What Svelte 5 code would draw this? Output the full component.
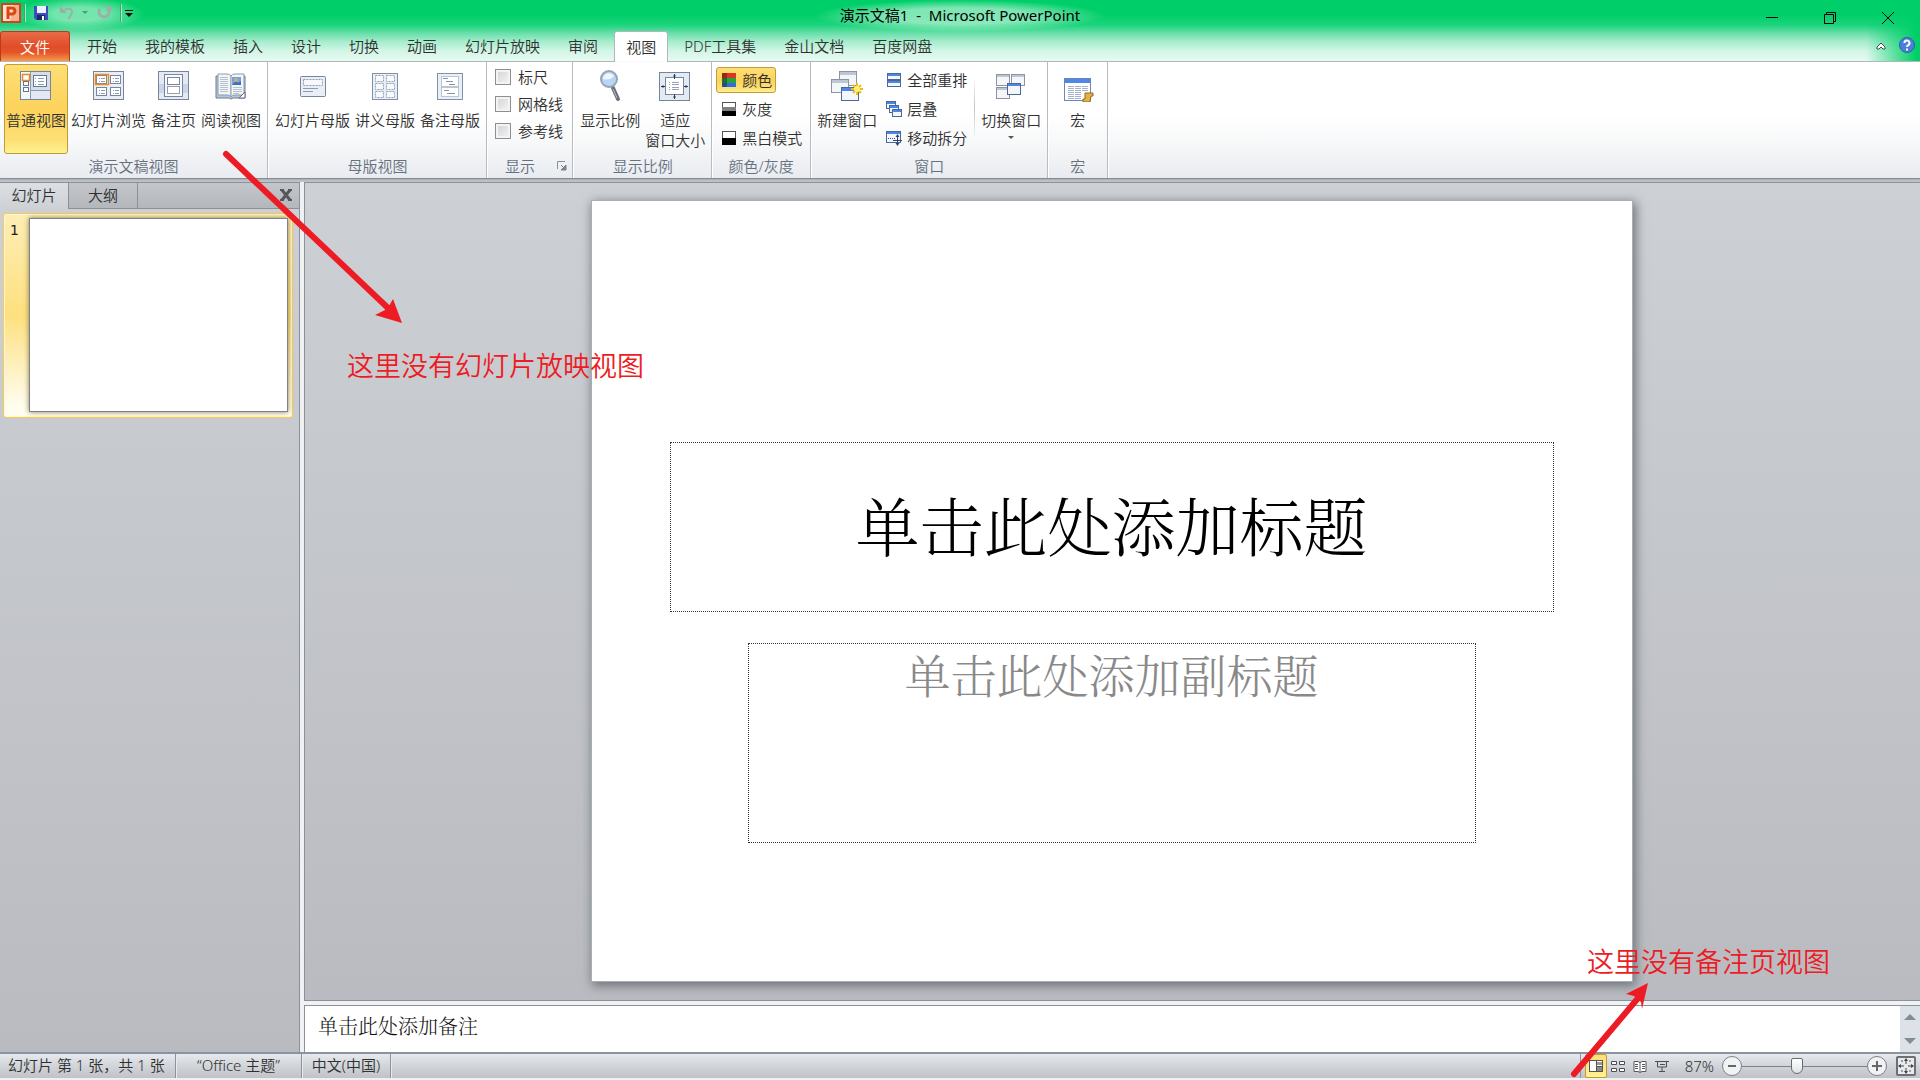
<script>
  const tabs = ['开始', '我的模板', '插入', '设计', '切换', '动画', '幻灯片放映', '审阅', '视图', 'PDF工具集', '金山文档', '百度网盘'];
  const presentationViews = [
    { label: '普通视图', icon: 'normal', active: true },
    { label: '幻灯片浏览', icon: 'sorter' },
    { label: '备注页', icon: 'notes' },
    { label: '阅读视图', icon: 'reading' }
  ];
  const masterViews = [
    { label: '幻灯片母版', icon: 'slideMaster' },
    { label: '讲义母版', icon: 'handoutMaster' },
    { label: '备注母版', icon: 'notesMaster' }
  ];
  const showOptions = ['标尺', '网格线', '参考线'];
  const colorModes = [
    { label: '颜色', icon: 'color', active: true },
    { label: '灰度', icon: 'gray' },
    { label: '黑白模式', icon: 'bw' }
  ];
  const windowActions = [
    { label: '全部重排', icon: 'arrange' },
    { label: '层叠', icon: 'cascade' },
    { label: '移动拆分', icon: 'split' }
  ];
  const statusViews = [
    { label: '普通视图', icon: 'sNormal', active: true },
    { label: '幻灯片浏览', icon: 'sSorter' },
    { label: '阅读视图', icon: 'sReading' },
    { label: '幻灯片放映', icon: 'sShow' }
  ];
  let zoom = $state(43);
</script>

{#snippet win(x, y, w, h, main)}
  <rect x={x + 0.5} y={y + 0.5} width={w - 1} height={h - 1} fill="#f4f6fa" stroke={main ? '#4a689c' : '#8b949f'} />
  <rect x={x + 1} y={y + 1} width={w - 2} height={w < 16 ? 2 : 3} fill={main ? '#4d86e8' : '#bcc6d4'} />
{/snippet}

{#snippet big(name)}
  <svg class="icon32" viewBox="0 0 32 32" aria-hidden="true">
    {#if name === 'normal'}
      <rect x="0.5" y="1.5" width="30" height="28" fill="#f3f6fa" stroke="#77859a" />
      <path d="M10.500 2v27M11 20.500h19" stroke="#8b99ad" fill="none" />
      <rect x="11" y="21" width="19" height="8" fill="#e3e9f2" />
      <rect x="11" y="2" width="19" height="18" fill="#d5dfec" />
      <rect x="2.500" y="4.500" width="7" height="6" fill="#fff" stroke="#ee8a22" stroke-width="1.500" />
      <rect x="3.500" y="11.500" width="5" height="4" fill="#fff" stroke="#66768e" />
      <rect x="3.500" y="17.500" width="5" height="4" fill="#fff" stroke="#66768e" />
      <rect x="13.500" y="5.500" width="13" height="11" fill="#fff" stroke="#66768e" />
      <path d="M18 8.500h6M18 11.500h6M18 14.500h6M15 8.500h1M15 11.500h1M15 14.500h1" stroke="#8d9ab0" />
    {:else if name === 'sorter'}
      <rect x="0.5" y="1.5" width="30" height="28" fill="#e9eef5" stroke="#77859a" />
      {#each [[3, 5], [17, 5], [3, 17], [17, 17]] as [x, y]}
        <rect x={x + 0.5} y={y + 0.5} width="10" height="8" fill="#fff" stroke="#7786a0" />
        <path d={`M${x + 5} ${y + 3.5}h4M${x + 5} ${y + 6.5}h4M${x + 3} ${y + 3.5}h1M${x + 3} ${y + 6.5}h1`} stroke="#8d9ab0" />
      {/each}
      <rect x="2.500" y="4.500" width="13" height="10" fill="none" stroke="#ee8a22" stroke-width="1.500" />
    {:else if name === 'notes'}
      <rect x="0.5" y="1.5" width="30" height="28" fill="#e3eaf3" stroke="#77859a" />
      <rect x="1" y="14" width="29" height="9" fill="#c8d7e8" />
      <rect x="6.500" y="4.500" width="18" height="22" fill="#f8fafc" stroke="#7786a0" />
      <rect x="9.500" y="7.500" width="12" height="7" fill="#fff" stroke="#7786a0" />
      <rect x="9.500" y="16.500" width="12" height="7" fill="#fff" stroke="#333f52" stroke-dasharray="1 1" />
    {:else if name === 'reading'}
      <path d="M1 6v22h13l2 1 2-1h12V6z" fill="#b9c6d6" stroke="#6d7c92" />
      <path d="M3 4h9q3 0 4 2v21q-1-2-4-2H3z" fill="#f1f4f8" stroke="#8f9bad" />
      <path d="M29 4h-9q-3 0-4 2v21q1-2 4-2h9z" fill="#f1f4f8" stroke="#8f9bad" />
      <path d="M5 7.500h8M5 9.500h8M5 11.500h8M5 13.500h8M5 15.500h8M5 17.500h8M5 19.500h8M5 21.500h8M18 17.500h9M18 19.500h9M18 21.500h9M18 23.500h6" stroke="#b8c1ce" />
      <rect x="17" y="7" width="9" height="8" fill="#6aa5e6" />
      <path d="M17 15l4-4 2 2 3-2v4z" fill="#3d6fb5" /><circle cx="21" cy="10" r="2" fill="#f2a25c" />
      <path d="M24 28l6-6v6z" fill="#fff" stroke="#5c6c84" />
    {:else if name === 'slideMaster'}
      <rect x="3.500" y="6.500" width="25" height="20" rx="1" fill="#eaeff7" stroke="#77859a" />
      <rect x="6.500" y="9.500" width="19" height="6" fill="#f6f8fb" stroke="#8e9cb2" stroke-dasharray="2 1" />
      <path d="M6 18.500h15M6 21.500h10" stroke="#8e9cb2" />
    {:else if name === 'handoutMaster'}
      <rect x="3.500" y="3.500" width="25" height="26" fill="#e9eff6" stroke="#8290a5" />
      {#each [5, 13, 21] as y}
        <rect x="6.500" y={y + 0.5} width="8" height="6" fill="#f8fafc" stroke="#95a3b8" stroke-dasharray="2 1" />
        <rect x="17.500" y={y + 0.5} width="8" height="6" fill="#f8fafc" stroke="#95a3b8" stroke-dasharray="2 1" />
      {/each}
    {:else if name === 'notesMaster'}
      <rect x="3.500" y="3.500" width="25" height="26" fill="#e9eff6" stroke="#8290a5" />
      <rect x="7.500" y="6.500" width="17" height="10" fill="#fff" stroke="#8593aa" stroke-dasharray="1 1" />
      <rect x="7.500" y="17.500" width="17" height="9" fill="#fff" stroke="#8593aa" stroke-dasharray="1 1" />
      <path d="M9 8.500h5M12 11.500h7M15 14.500h6M10 20.500h5M13 23.500h8" stroke="#8593aa" />
    {:else if name === 'magnifier'}
      <path d="M19 18l5 11" stroke="#6a717b" stroke-width="4" stroke-linecap="round" />
      <path d="M19 19l4 9" stroke="#b4bac4" stroke-width="1" />
      <circle cx="15" cy="9" r="8" fill="#b8d5f2" stroke="#96a4b8" stroke-width="2" />
      <path d="M9 9a6 6 0 0 1 11-3q-4 5-11 3z" fill="#eef6fe" />
    {:else if name === 'fit'}
      <rect x="0.5" y="2.500" width="30" height="28" fill="#e2eaf4" stroke="#77859a" />
      <rect x="6.500" y="7.500" width="18" height="17" fill="#fff" stroke="#7786a0" />
      <path d="M13 12.500h7M13 14.500h7M13 17.500h7M13 19.500h7M10 12.500h1M10 14.500h1M10 17.500h1M10 19.500h1" stroke="#95a3ba" />
      <path d="M15.500 4v5M15.500 24v5M2 16.500h4M25 16.500h4" stroke="#333b48" />
      <path d="M14 6.500l1.500-2.500 1.500 2.500zM14 26.500l1.500 2.500 1.500-2.500zM4.500 15L2 16.500 4.500 18zM26.500 15l2.500 1.500-2.500 1.500z" fill="#333b48" />
    {:else if name === 'newWindow'}
      {@render win(8, 1, 18, 15, false)}
      {@render win(0, 9, 18, 14, false)}
      {@render win(10, 17, 18, 14, true)}
      <path d="M26 13v12M20 19h12M22 15l8 8M30 15l-8 8" stroke="#f3bb17" stroke-width="2" />
      <circle cx="26" cy="19" r="3" fill="#fff27a" />
    {:else if name === 'switchWindow'}
      {@render win(1, 4, 14, 12, false)}
      {@render win(16, 4, 14, 12, false)}
      {@render win(1, 17, 14, 12, false)}
      {@render win(12, 13, 14, 12, true)}
    {:else if name === 'macro'}
      <rect x="2.500" y="8.500" width="26" height="22" fill="#fff" stroke="#6d86b2" />
      <rect x="3" y="9" width="25" height="4" fill="#4d86e8" />
      <path d="M6 16.500h6M6 18.500h6M6 20.500h6M6 22.500h6M6 24.500h6M6 26.500h6M6 28.500h6M13 16.500h6M13 18.500h6M13 20.500h6M13 22.500h6M13 24.500h6M13 26.500h6M13 28.500h6M20 16.500h6M20 18.500h6M20 20.500h6" stroke="#a5b1c8" />
      <path d="M23 23h8v3h-2l-1 6h-7v-3h2z" fill="#e3b244" stroke="#94681a" />
    {/if}
  </svg>
{/snippet}

{#snippet small(name)}
  <svg class="icon16" viewBox="0 0 16 16" aria-hidden="true">
    {#if name === 'color'}
      <rect x="1" y="1" width="14" height="5" fill="#d93820" /><rect x="1" y="6" width="14" height="5" fill="#2ba138" /><rect x="1" y="11" width="14" height="4" fill="#2d6fe0" />
      <path d="M1 1h5v14H1z" fill="#000" opacity=".3" />
    {:else if name === 'gray'}
      <rect x="1.500" y="1.500" width="13" height="13" fill="#fff" stroke="#555" /><rect x="1" y="6" width="14" height="4" fill="#808080" /><rect x="1" y="10" width="14" height="5" fill="#000" />
    {:else if name === 'bw'}
      <rect x="1.500" y="1.500" width="13" height="13" fill="#fff" stroke="#555" /><rect x="1" y="8" width="14" height="7" fill="#000" />
    {:else if name === 'arrange'}
      {@render win(1, 1, 14, 7, true)}
      {@render win(1, 8, 14, 7, true)}
    {:else if name === 'cascade'}
      {@render win(0, 0, 10, 8, true)}
      {@render win(3, 4, 10, 8, true)}
      {@render win(6, 8, 10, 8, true)}
    {:else if name === 'split'}
      {@render win(0, 1, 15, 12, true)}
      <path d="M2 8.500h7" stroke="#3b4f75" stroke-dasharray="1 1" />
      <path d="M11.500 6v9M7 10.500h9" stroke="#2c4470" />
      <path d="M9.500 7l2-3 2 3zM9.500 13l2 3 2-3z" fill="#2c4470" />
    {:else if name === 'sNormal'}
      <rect x="1.500" y="2.500" width="13" height="11" fill="#fff" stroke="#555" /><path d="M8.500 3v10M9 8.500h5" stroke="#555" /><rect x="9" y="4" width="5" height="3" fill="#9a9a9a" /><rect x="9" y="9" width="5" height="4" fill="#8a8a8a" />
    {:else if name === 'sSorter'}
      <path d="M1.500 3.500h5v3h-5zM9.500 3.500h5v3h-5zM1.500 10.500h5v3h-5zM9.500 10.500h5v3h-5z" fill="#fff" stroke="#4c4f54" />
    {:else if name === 'sReading'}
      <path d="M2 3.500h4l2 1 2-1h4v10h-4l-2 1-2-1H2z" fill="#fff" stroke="#55585e" /><path d="M8 4v10M3 6.500h3M3 8.500h3M3 10.500h3M10 6.500h3M10 8.500h3M10 10.500h3" stroke="#55585e" />
    {:else if name === 'sShow'}
      <path d="M1 3.500h14M3.500 4v5h9V4M8 9v4M5 13.500h6M6 6.500h5" fill="none" stroke="#4c4f54" />
    {/if}
  </svg>
{/snippet}

<div class="app">
  <header>
    <div class="titlebar">
      <div class="qat">
        <svg class="logo" viewBox="0 0 20 20" aria-hidden="true">
          <rect x="1" y="1" width="18" height="18" fill="#fde0cf" stroke="#d8401c" stroke-width="2" />
          <path d="M13 2h5v16H9z" fill="#f8b092" />
          <path d="M7 16V5h4a3 3 0 0 1 0 6H7" fill="none" stroke="#d9480f" stroke-width="3" />
        </svg>
        <span class="vsep"></span>
        <button class="tool" aria-label="保存">
          <svg viewBox="0 0 16 16"><path d="M1 1h14v14H3l-2-2z" fill="#3c4ec0" /><rect x="4" y="1" width="9" height="7" fill="#eef2ff" /><rect x="4" y="10" width="8" height="5" fill="#1d2a66" /><rect x="9" y="11" width="2" height="4" fill="#fff" /></svg>
        </button>
        <button class="tool" aria-label="撤消">
          <svg viewBox="0 0 16 16"><path d="M4 6q7-5 9 0 0 4-4 8" fill="none" stroke="#9db0a7" stroke-width="2" /><path d="M1 1v7h7z" fill="#9db0a7" /></svg>
        </button>
        <svg class="tiny undo-menu" viewBox="0 0 8 8"><path d="M1 2h6L4 5z" fill="#4b9a77" /></svg>
        <button class="tool" aria-label="重复">
          <svg viewBox="0 0 16 16"><path d="M4 4a5 5 0 1 0 8 0" fill="none" stroke="#9db0a7" stroke-width="3" /><path d="M8 1h7v6z" fill="#9db0a7" /></svg>
        </button>
        <span class="vsep"></span>
        <button class="menu" aria-label="自定义快速访问工具栏">
          <svg viewBox="0 0 8 16"><path d="M0 5h8v1H0zM0 8h8l-4 4z" fill="#111" /></svg>
        </button>
      </div>
      <h1>演示文稿1&nbsp; -&nbsp; Microsoft PowerPoint</h1>
      <div class="controls">
        <button aria-label="最小化"><svg viewBox="0 0 14 14"><path d="M1 6.500h12" stroke="#000" /></svg></button>
        <button aria-label="还原"><svg viewBox="0 0 14 14"><path d="M1.500 3.500h9v9h-9zM3.500 3.500v-2h9v9h-2" fill="none" stroke="#000" /></svg></button>
        <button aria-label="关闭"><svg viewBox="0 0 14 14"><path d="M1 1l12 12M13 1L1 13" stroke="#000" /></svg></button>
      </div>
    </div>
    <nav class="tabs">
      <button class="file">文件</button>
      {#each tabs as tab}
        <button class="tab" class:active={tab === '视图'}>{tab}</button>
      {/each}
      <div class="help">
        <button aria-label="功能区最小化"><svg viewBox="0 0 16 16"><path d="M4 10l4-4 4 4v2h-2l-2-2-2 2H4z" fill="#fff" stroke="#45504b" /></svg></button>
        <button aria-label="帮助"><svg viewBox="0 0 16 16"><circle cx="8" cy="8" r="7.500" fill="#4a80d6" stroke="#2f5fb0" /><path d="M5.500 6a2.500 2.500 0 1 1 3.500 2.300q-1 .5-1 1.700M8 11.500v2" fill="none" stroke="#fff" stroke-width="2" /></svg></button>
      </div>
    </nav>
  </header>

  <section class="ribbon">
    <div class="group">
      <div class="body">
        {#each presentationViews as item}
          <button class="big" class:active={item.active}>{@render big(item.icon)}<span>{item.label}</span></button>
        {/each}
      </div>
      <div class="caption">演示文稿视图</div>
    </div>
    <div class="group roomy">
      <div class="body">
        {#each masterViews as item}
          <button class="big">{@render big(item.icon)}<span>{item.label}</span></button>
        {/each}
      </div>
      <div class="caption">母版视图</div>
    </div>
    <div class="group roomy">
      <div class="body checks">
        {#each showOptions as option}
          <label><input type="checkbox" />{option}</label>
        {/each}
      </div>
      <div class="caption with-launcher"><span>显示</span>
        <button class="launcher" aria-label="网格设置"><svg viewBox="0 0 10 10"><path d="M.5 8V.5H8" fill="none" stroke="#8b9098" /><path d="M4 4l3 3M9 4v5H4z" fill="#7e838b" stroke="#7e838b" /></svg></button>
      </div>
    </div>
    <div class="group roomy">
      <div class="body">
        <button class="big">{@render big('magnifier')}<span>显示比例</span></button>
        <button class="big">{@render big('fit')}<span>适应<br />窗口大小</span></button>
      </div>
      <div class="caption">显示比例</div>
    </div>
    <div class="group">
      <div class="body list">
        {#each colorModes as item}
          <button class="row" class:active={item.active}>{@render small(item.icon)}{item.label}</button>
        {/each}
      </div>
      <div class="caption">颜色/灰度</div>
    </div>
    <div class="group">
      <div class="body">
        <button class="big">{@render big('newWindow')}<span>新建窗口</span></button>
        <div class="list inner">
          {#each windowActions as item}
            <button class="row">{@render small(item.icon)}{item.label}</button>
          {/each}
        </div>
        <span class="divider"></span>
        <button class="big">{@render big('switchWindow')}<span>切换窗口</span><svg class="tiny drop" viewBox="0 0 8 8"><path d="M1 2h6L4 5z" fill="#555" /></svg></button>
      </div>
      <div class="caption">窗口</div>
    </div>
    <div class="group macro">
      <div class="body">
        <button class="big">{@render big('macro')}<span>宏</span></button>
      </div>
      <div class="caption">宏</div>
    </div>
  </section>

  <main>
    <aside>
      <div class="pane-tabs">
        <button class="pane-tab active">幻灯片</button>
        <button class="pane-tab">大纲</button>
        <button class="close" aria-label="关闭窗格"><svg viewBox="0 0 14 14"><path d="M3 2l8 10M11 2L3 12" stroke="#54585e" stroke-width="3" /><path d="M1 2h4M9 2h4M1 12h4M9 12h4" stroke="#54585e" stroke-width="2" /></svg></button>
      </div>
      <div class="thumb">
        <span class="num">1</span>
        <div class="mini"></div>
      </div>
    </aside>
    <div class="work">
      <div class="canvas">
        <article class="slide">
          <div class="ph title">单击此处添加标题</div>
          <div class="ph sub">单击此处添加副标题</div>
        </article>
      </div>
      <div class="notes">
        <textarea aria-label="备注" placeholder="单击此处添加备注"></textarea>
        <div class="scroll">
          <svg viewBox="0 0 12 6"><path d="M0 6l6-6 6 6z" fill="#7f8f93" /></svg>
          <svg viewBox="0 0 12 6"><path d="M0 0l6 6 6-6z" fill="#7f8f93" /></svg>
        </div>
      </div>
    </div>
  </main>

  <footer>
    <span class="cell first">幻灯片 第 1 张，共 1 张</span>
    <span class="cell theme">“Office 主题”</span>
    <span class="cell lang">中文(中国)</span>
    <div class="right">
      <div class="views">
        {#each statusViews as item}
          <button class:active={item.active} aria-label={item.label}>{@render small(item.icon)}</button>
        {/each}
      </div>
      <span class="percent">87%</span>
      <button class="round" aria-label="缩小"><svg viewBox="0 0 20 20"><circle cx="10" cy="10" r="9.500" fill="#f0f2f4" stroke="#7b828b" /><path d="M6 10h8" stroke="#666" stroke-width="2" /></svg></button>
      <input type="range" min="0" max="100" bind:value={zoom} aria-label="显示比例" />
      <button class="round" aria-label="放大"><svg viewBox="0 0 20 20"><circle cx="10" cy="10" r="9.500" fill="#f0f2f4" stroke="#7b828b" /><path d="M5 10h10M10 5v10" stroke="#666" stroke-width="2" /></svg></button>
      <button class="round fit" aria-label="使幻灯片适应当前窗口"><svg viewBox="0 0 20 20"><rect x="1" y="1" width="18" height="18" rx="1" fill="#e8eaee" stroke="#6c7076" stroke-width="2" /><path d="M10 3v5M10 12v5M3 10h5M12 10h5" stroke="#444" /><path d="M8 5l2-3 2 3zM8 15l2 3 2-3zM5 8l-3 2 3 2zM15 8l3 2-3 2z" fill="#444" /><path d="M5 5h2M13 5h2M5 15h2M13 15h2" stroke="#555" /></svg></button>
    </div>
  </footer>

  <svg class="arrow one" viewBox="0 0 184 176" aria-hidden="true">
    <path d="M6 6L168 160" stroke="#ed1c24" stroke-width="6" stroke-linecap="round" />
    <path d="M182 175l-9-24-4 7-4 4-10 5z" fill="#ed1c24" />
  </svg>
  <p class="remark first-remark">这里没有幻灯片放映视图</p>
  <svg class="arrow two" viewBox="0 0 82 98" aria-hidden="true">
    <path d="M5 93L70 16" stroke="#ed1c24" stroke-width="6" stroke-linecap="round" />
    <path d="M79 2L57 13l8 2 7 6 1 7z" fill="#ed1c24" />
  </svg>
  <p class="remark second-remark">这里没有备注页视图</p>
</div>

<style>
  :global(body) { margin: 0; }
  .app {
    position: relative;
    display: flex;
    flex-direction: column;
    height: 100vh;
    overflow: hidden;
    box-sizing: border-box;
    padding-bottom: 2px;
    background: #f0f0f0;
    color: #303030;
    font: 350 15px/20px 'Noto Sans', 'Noto Sans CJK SC', sans-serif;
  }
  .app *, .app *::before { box-sizing: border-box; }
  button { font: inherit; color: inherit; background: none; border: 0; padding: 0; margin: 0; }
  svg { display: block; flex: none; }
  header {
    background:
      radial-gradient(ellipse 64px 17px at 80px 14px, rgba(255, 255, 255, .45) 40%, rgba(255, 255, 255, 0)),
      radial-gradient(ellipse 145px 16px at 50% 16px, rgba(255, 255, 255, .5) 50%, rgba(255, 255, 255, 0)),
      linear-gradient(to right, rgba(0, 207, 105, 0) calc(100% - 54px), #00cf69 calc(100% - 4px)),
      linear-gradient(#00cf69 15px, #1cd47c 25px, #6fe0ad 34px, #a8edce 42px, #d2f6e6 51px, #e6faf1 61px);
  }
  .titlebar { display: grid; grid-template-columns: 1fr auto 1fr; height: 31px; }
  .qat { display: flex; align-items: center; height: 26px; padding-left: 1px; }
  .logo { width: 20px; height: 20px; }
  .vsep { width: 1px; height: 18px; margin: 0 3px; background: #4f9c78; box-shadow: 1px 0 #9fe8c6; }
  .qat .tool { padding: 0 5px; }
  .qat .tool svg { width: 16px; height: 16px; }
  .menu { padding-left: 1px; }
  .menu svg { width: 8px; height: 16px; }
  .tiny { width: 8px; height: 8px; }
  .undo-menu { margin: 0 2px 0 1px; }
  h1 {
    margin: 0;
    padding: 5px 0 0;
    font-size: 15px;
    line-height: 20px;
    font-weight: 400;
    color: #000;
  }
  .controls { display: flex; justify-content: flex-end; padding: 4px 3px 0 0; }
  .controls button { display: flex; align-items: center; justify-content: center; width: 58px; height: 28px; }
  .controls svg { width: 14px; height: 14px; }
  .tabs { display: flex; height: 31px; border-bottom: 1px solid #b3b6bb; }
  .tabs button { height: 30px; }
  .file {
    width: 70px;
    margin-right: 3px;
    color: #fff;
    border: 1px solid #b93b1b;
    border-bottom: 0;
    border-radius: 3px 3px 0 0;
    background: linear-gradient(#ea6a48, #e04e28 50%, #e5532a 70%, #f59a4a);
  }
  .tab { padding: 0 14px; }
  .tabs .active {
    height: 31px;
    margin: 0 2px;
    border: 1px solid #b3b6bb;
    border-bottom: 0;
    border-radius: 3px 3px 0 0;
    padding: 0 11px 1px;
    background: #fff;
  }
  .help { display: flex; gap: 10px; margin-left: auto; padding: 0 5px 2px 0; align-items: center; }
  .help svg { width: 16px; height: 16px; }
  .ribbon {
    position: relative;
    z-index: 1;
    display: flex;
    height: 117px;
    border-bottom: 1px solid #878b92;
    background: linear-gradient(#fff 45%, #f7f8f9 70%, #e8ebf0);
    box-shadow: 0 1px 2px #a5a9b0;
  }
  .group {
    display: flex;
    flex-direction: column;
    padding: 2px 4px 0;
    border-right: 1px solid #b9bdc3;
    box-shadow: 1px 0 #fff;
  }
  .group.roomy { padding: 2px 4px 0 5px; }
  .body { display: flex; height: 90px; }
  .caption { padding-top: 2px; text-align: center; color: #66707f; }
  .big {
    display: flex;
    flex-direction: column;
    align-items: center;
    gap: 8px;
    height: 90px;
    padding: 5px 1px 0;
    border: 1px solid transparent;
    white-space: nowrap;
  }
  .big + .big { margin-left: 1px; }
  .big.active, .row.active {
    border: 1px solid #c29b39;
    border-radius: 3px;
    background: linear-gradient(#fddf75, #fcd25c 50%, #fde076 85%, #fff28e);
  }
  .big .drop { margin-top: -4px; }
  .icon32 { width: 32px; height: 32px; }
  .icon16 { width: 16px; height: 16px; }
  .checks { flex-direction: column; padding: 0 5px 0 3px; }
  .checks label { display: flex; align-items: center; gap: 7px; height: 27px; padding-bottom: 2px; }
  .checks input {
    appearance: none;
    width: 16px;
    height: 16px;
    margin: 0;
    border: 1px solid #8e8f8f;
    background: linear-gradient(135deg, #cfd2d6, #f5f5f5);
    box-shadow: inset 0 0 0 2px #f3f3f3;
  }
  .with-launcher { display: flex; justify-content: space-between; padding-left: 13px; }
  .launcher { padding-right: 1px; }
  .launcher svg { width: 10px; height: 10px; }
  .list { display: flex; flex-direction: column; gap: 3px; padding-top: 3px; align-items: flex-start; }
  .row { display: flex; align-items: center; gap: 5px; height: 26px; padding: 0 3px 0 4px; border: 1px solid transparent; }
  .inner { padding-left: 2px; }
  .divider { width: 1px; height: 56px; margin: 16px 4px 0 3px; background: linear-gradient(#f4f5f6, #c0c4ca 50%, #f0f1f3); }
  .macro .big { min-width: 51px; }
  main { flex: 1; min-height: 0; display: flex; padding-top: 3px; background: #c3c6cb; }
  aside {
    flex: none;
    width: 300px;
    border: 1px solid #8b919b;
    border-left: 0;
    border-bottom: 0;
    background: linear-gradient(#cdd0d5, #b9bbc0);
  }
  .pane-tabs { display: flex; height: 26px; background: linear-gradient(#c3c6cb, #b3b6bb); }
  .pane-tab { width: 69px; padding-bottom: 2px; border-right: 1px solid #8b919b; border-bottom: 1px solid #8b919b; }
  .pane-tab.active { border-bottom: 0; padding-bottom: 3px; background: linear-gradient(#dcdfe4, #cdd0d5); }
  .close { flex: 1; display: flex; justify-content: flex-end; align-items: center; padding: 0 6px 1px 0; border-bottom: 1px solid #8b919b; }
  .close svg { width: 14px; height: 14px; }
  .thumb {
    display: flex;
    margin: 4px 6px 0 3px;
    padding: 4px 4px 5px 0;
    border: 1px solid #f3cd5c;
    border-radius: 3px;
    background: linear-gradient(#fdeeb5, #fde07f 50%, #fffdf0 95%);
    box-shadow: inset 0 0 0 1px #fff6d0;
  }
  .num { width: 25px; padding: 2px 0 0 6px; font: 400 14px/20px 'DejaVu Sans', sans-serif; color: #222; }
  .mini { flex: 1; aspect-ratio: 260 / 195; background: #fff; border: 1px solid #7d838c; box-shadow: 0 0 5px #8a7a45; }
  .work { flex: 1; min-width: 0; display: flex; flex-direction: column; background: #f0f1f2; padding-left: 4px; }
  .canvas {
    flex: 1;
    min-height: 0;
    display: flex;
    justify-content: center;
    padding: 17px 2px 18px 0;
    border: 1px solid #8b919b;
    border-right: 0;
    background: linear-gradient(#cdd0d5, #b9bbc0);
  }
  .slide {
    display: grid;
    grid-template-rows: 241fr 170fr 31fr 200fr 138fr;
    justify-items: center;
    height: 100%;
    aspect-ratio: 1042 / 782;
    border: 1px solid #a7aeb7;
    background: #fff;
    box-shadow: 2px 3px 10px 1px #70757a;
  }
  .ph { display: flex; justify-content: center; border: 1px dotted #333; white-space: nowrap; font-family: 'Noto Serif CJK SC', 'Noto Sans CJK SC', serif; font-weight: 300; }
  .title { grid-row: 2; width: 85%; align-items: center; padding-bottom: 8px; font-size: 64px; line-height: 80px; color: #000; }
  .sub { grid-row: 4; width: 70%; font-size: 46px; line-height: 58px; color: #898989; }
  .notes { display: flex; height: 47px; margin-top: 4px; border: 1px solid #8b919b; border-width: 1px 0 0 1px; background: #fff; }
  textarea {
    flex: 1;
    resize: none;
    border: 0;
    outline: 0;
    padding: 6px 13px;
    font: 300 20px/28px 'Noto Serif CJK SC', 'Noto Sans CJK SC', serif;
    background: #fff;
  }
  textarea::placeholder { color: #111; opacity: 1; }
  .scroll { display: flex; flex-direction: column; justify-content: space-between; align-items: center; width: 20px; padding: 8px 0; background: #dde1e8; }
  .scroll svg { width: 12px; height: 6px; }
  footer {
    display: flex;
    align-items: center;
    height: 26px;
    border-top: 2px solid #8b939e;
    background: linear-gradient(#e6e9ed, #d3d6da 45%, #bfc3c8);
    white-space: nowrap;
  }
  .cell { height: 24px; line-height: 22px; border-right: 1px solid #8d929a; box-shadow: 1px 0 #e8eaed; }
  .first { min-width: 176px; padding: 0 8px; }
  .theme { min-width: 126px; padding: 0 16px; text-align: center; }
  .lang { min-width: 89px; padding: 0 8px; text-align: center; }
  .right { display: flex; align-items: center; height: 24px; margin-left: auto; padding-right: 4px; }
  .views { display: flex; height: 24px; padding-left: 4px; border-left: 1px solid #8d929a; }
  .views button { display: flex; align-items: center; justify-content: center; width: 22px; height: 24px; }
  .views .active { border: 1px solid #c29b39; border-radius: 2px; background: linear-gradient(#fddf75, #fff28e); }
  .percent { padding: 0 8px 0 12px; }
  .round svg { width: 20px; height: 20px; }
  input[type='range'] {
    appearance: none;
    width: 125px;
    height: 20px;
    margin: 0;
    background: linear-gradient(#7b828b, #7b828b) center / 100% 1px no-repeat;
  }
  input[type='range']::-webkit-slider-thumb {
    appearance: none;
    width: 12px;
    height: 16px;
    border: 1px solid #666c75;
    border-radius: 2px 2px 6px 6px;
    background: linear-gradient(#fff, #dfe2e6);
  }
  .fit { margin-left: 9px; }
  .arrow, .remark { position: absolute; z-index: 2; pointer-events: none; }
  .one { left: 220px; top: 148px; width: 184px; height: 176px; }
  .two { left: 1569px; top: 981px; width: 82px; height: 98px; }
  .remark { margin: 0; font-size: 27px; line-height: 36px; color: #ed1c24; white-space: nowrap; }
  .first-remark { left: 347px; top: 348px; }
  .second-remark { left: 1587px; top: 944px; }
</style>
